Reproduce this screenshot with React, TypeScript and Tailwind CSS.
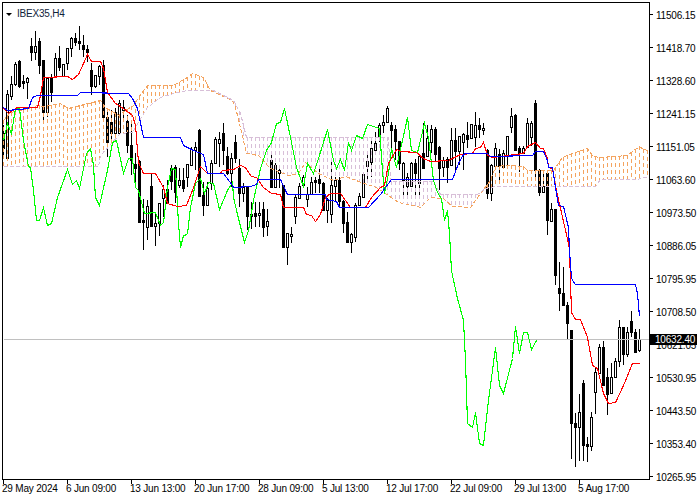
import React from "react";

type P = [number, number];
// [high, bodyTop, bodyBottom, low, white?] — one bar every 4 px, starting at x = 3
const bars: [number, number, number, number, number][] = [
  [125,133,148,158,0],[90,94,158,160,1],[76,84,96,100,1],[62,64,84,86,1],[60,61,86,88,0],[75,81,83,89,0],[77,78,82,99,1],[38,46,52,61,0],
  [31,46,52,60,1],[38,41,65,74,0],[60,60,112,122,0],[77,78,112,117,1],[74,78,92,102,0],[53,58,76,77,1],[46,58,67,71,0],[64,64,76,77,1],
  [48,48,63,70,1],[37,38,48,57,1],[33,38,42,46,0],[26,41,43,50,0],[35,45,49,57,0],[45,49,52,62,0],[63,70,86,95,0],[75,75,86,88,1],
  [65,66,76,85,1],[60,65,117,118,0],[110,117,142,157,0],[110,122,133,142,0],[108,112,133,137,1],[100,103,133,135,1],[100,107,110,120,1],[115,121,145,153,0],
  [123,145,160,175,0],[153,164,168,185,0],[160,161,222,222,0],[199,220,222,250,0],[200,206,227,240,1],[173,186,226,226,0],[212,223,226,246,1],[203,203,223,236,1],
  [185,189,198,217,1],[180,189,203,203,0],[165,168,181,190,0],[165,167,192,203,0],[168,180,185,188,1],[168,180,188,192,0],[164,164,177,187,1],[147,149,165,165,1],
  [142,147,150,170,1],[129,130,196,197,0],[182,195,205,216,0],[182,188,205,205,1],[160,163,183,190,1],[137,139,163,163,1],[132,139,143,167,1],[123,133,150,165,0],
  [147,156,173,175,0],[153,158,173,187,1],[135,142,158,163,0],[159,168,193,207,0],[183,187,193,202,1],[186,186,216,230,0],[202,214,216,229,0],[202,213,216,227,0],
  [202,213,215,227,1],[202,209,227,237,0],[209,221,226,236,1],[153,160,187,187,0],[163,165,187,188,1],[165,170,173,188,1],[185,185,247,247,0],[233,233,247,265,1],
  [227,234,236,243,1],[194,197,216,224,1],[183,186,198,198,1],[175,177,185,187,1],[187,194,199,207,1],[177,182,194,195,1],[177,180,182,193,0],[168,179,183,193,0],
  [182,183,210,210,0],[198,200,210,223,1],[158,185,214,223,1],[177,180,186,202,1],[177,180,201,207,0],[200,201,223,233,0],[212,222,242,242,0],[233,234,242,253,1],
  [203,205,237,242,1],[193,196,205,206,1],[174,174,197,197,1],[155,161,166,179,1],[138,148,162,177,1],[132,143,150,150,1],[123,125,136,142,1],[115,122,125,133,1],
  [106,108,122,122,1],[122,125,130,153,0],[125,129,141,160,0],[141,141,163,170,0],[162,163,180,197,1],[173,177,186,197,1],[162,163,186,186,1],[159,163,173,197,0],
  [156,156,183,197,1],[123,153,168,168,0],[125,138,156,156,1],[125,129,142,153,1],[127,129,154,162,0],[146,147,168,190,0],[157,160,167,177,1],[157,159,167,183,0],
  [128,140,165,166,1],[128,140,151,170,0],[136,136,151,165,1],[133,134,142,170,1],[122,135,139,148,0],[124,124,138,139,1],[112,125,137,147,1],[118,125,129,138,0],
  [123,128,130,135,1],[149,150,193,199,0],[164,165,193,201,1],[143,148,166,167,1],[149,154,166,182,0],[150,153,167,167,1],[136,136,155,166,1],[108,116,127,133,1],
  [114,115,150,151,0],[146,148,153,172,0],[146,148,153,154,1],[118,123,147,147,1],[121,123,137,146,1],[100,103,170,181,0],[169,170,192,196,0],[174,186,192,192,1],
  [173,173,220,235,0],[203,209,221,222,1],[209,209,275,285,0],[262,288,293,311,0],[267,293,305,306,0],[302,305,323,340,0],[330,330,423,459,0],[413,423,427,467,0],
  [394,412,427,461,1],[380,383,445,461,0],[437,444,446,462,0],[412,417,446,451,1],[368,372,392,414,1],[344,347,373,373,1],[341,347,385,385,0],[368,377,394,415,0],
  [363,377,393,394,1],[358,361,377,378,1],[320,327,361,367,1],[327,327,354,365,0],[327,332,354,357,1],[311,321,332,337,0],[329,332,352,353,0],[329,339,350,352,1],
];

const blue: P[] = [[3,107],[7,110],[28,108],[32,97],[37,95],[77,95],[80,92],[128,93],[132,98],[137,108],[143,137],[180,137],[183,145],[193,150],[203,154],[207,173],[223,173],[232,185],[233,187],[250,186],[256,184],[258,179],[280,179],[287,194],[325,194],[326,199],[336,201],[339,207],[368,207],[380,194],[385,187],[391,179],[452,179],[458,163],[463,154],[465,153],[487,153],[490,156],[532,155],[535,151],[543,151],[547,160],[548,167],[552,167],[555,187],[558,205],[563,206],[568,227],[569,250],[571,278],[575,284],[635,284],[637,293],[639,316]];
const red: P[] = [[3,108],[8,113],[17,107],[37,107],[40,95],[43,77],[67,76],[72,79],[78,74],[83,63],[87,54],[91,61],[100,61],[103,68],[107,92],[115,103],[123,108],[132,115],[135,125],[138,162],[143,173],[155,173],[163,187],[167,203],[177,206],[186,205],[192,190],[200,166],[207,173],[220,173],[222,170],[233,169],[240,165],[245,167],[251,176],[256,177],[263,187],[271,193],[280,194],[283,207],[303,207],[306,214],[311,215],[315,221],[320,214],[325,197],[330,193],[340,193],[350,207],[365,207],[371,197],[380,187],[384,185],[388,163],[396,149],[401,151],[416,152],[423,158],[430,161],[448,160],[460,154],[472,153],[475,148],[480,147],[483,142],[487,155],[492,157],[523,153],[527,146],[535,142],[540,148],[543,148],[547,158],[548,167],[552,168],[555,186],[568,243],[569,250],[571,312],[575,319],[580,319],[587,337],[592,365],[597,368],[603,393],[608,403],[615,402],[623,385],[632,363],[639,363]];
const green: P[] = [[3,140],[7,123],[11,133],[15,108],[19,108],[23,140],[28,166],[30,167],[33,190],[36,220],[39,220],[43,207],[47,225],[51,223],[57,197],[62,183],[67,169],[72,184],[76,180],[79,188],[86,153],[90,148],[93,165],[95,197],[99,205],[107,170],[112,142],[116,140],[123,173],[128,158],[132,158],[135,187],[138,190],[144,213],[155,212],[160,225],[163,222],[167,187],[171,168],[175,169],[178,223],[180,247],[183,235],[187,234],[190,207],[195,183],[200,178],[204,193],[208,182],[213,183],[219,209],[227,190],[232,182],[233,197],[238,218],[244,242],[248,230],[253,200],[260,168],[266,150],[271,142],[276,123],[280,122],[284,108],[290,137],[296,167],[303,186],[307,163],[313,173],[318,158],[327,129],[333,160],[336,168],[340,159],[344,170],[348,142],[351,150],[356,135],[362,138],[367,124],[379,128],[382,170],[384,193],[388,173],[391,148],[396,167],[407,117],[411,150],[417,152],[424,123],[428,137],[433,180],[437,192],[441,198],[444,220],[447,210],[449,233],[451,270],[452,275],[457,298],[463,320],[465,360],[467,423],[472,427],[475,412],[479,443],[483,445],[488,400],[495,347],[499,385],[503,393],[512,358],[515,326],[519,353],[523,332],[527,332],[531,349],[536,340]];
const spanA: P[] = [[3,120],[10,112],[28,108],[37,105],[43,106],[60,103],[68,108],[80,105],[100,100],[105,107],[118,115],[125,110],[133,105],[138,97],[147,85],[173,85],[187,77],[192,73],[203,77],[210,90],[232,100],[235,107],[240,127],[246,153],[258,155],[270,168],[288,175],[298,173],[305,162],[318,173],[333,180],[345,176],[361,182],[376,187],[388,195],[398,202],[413,205],[420,207],[430,197],[443,198],[452,206],[470,207],[480,193],[490,180],[495,166],[507,165],[523,166],[527,170],[553,170],[562,157],[572,153],[587,148],[592,155],[598,157],[615,156],[627,155],[632,151],[639,146],[643,149],[648,150]];
const spanB: P[] = [[3,166],[98,166],[100,155],[120,133],[132,132],[147,107],[160,97],[173,93],[187,90],[213,90],[233,100],[240,113],[246,137],[388,137],[390,181],[433,181],[440,194],[477,194],[485,188],[495,186],[595,186],[600,179],[637,179],[643,177],[648,177]];

function at(pts: P[], x: number) {
  for (let i = 1; i < pts.length; i++) {
    if (x <= pts[i][0]) {
      const [x0, y0] = pts[i - 1];
      const [x1, y1] = pts[i];
      return Math.round(y0 + ((y1 - y0) * (x - x0)) / Math.max(1, x1 - x0));
    }
  }
  return pts[pts.length - 1][1];
}
const str = (pts: P[]) => pts.map((p) => p.join(",")).join(" ");

let hatchOrange = "";
let hatchThistle = "";
for (let x = 3; x <= 647; x += 4) {
  const a = at(spanA, x);
  const b = at(spanB, x);
  const seg = `M${x}.5 ${Math.min(a, b)}V${Math.max(a, b)}`;
  if (a <= b) hatchOrange += seg;
  else hatchThistle += seg;
}

const prices = ["11506.15","11418.70","11328.60","11241.15","11151.05","11063.60","10973.50","10886.05","10795.95","10708.50","10621.05","10530.95","10443.50","10353.40","10265.95"];
const dates = ["29 May 2024","6 Jun 09:00","13 Jun 13:00","20 Jun 17:00","28 Jun 09:00","5 Jul 13:00","12 Jul 17:00","22 Jul 09:00","29 Jul 13:00","5 Aug 17:00"];

function Chart() {
  return (
    <svg width={646} height={476} viewBox="3 3 646 476" shapeRendering="crispEdges" className="block">
      {bars.map(([h, t, b, l, w], i) => {
        const x = 3 + i * 4;
        return (
          <g key={i}>
            <rect x={x} y={h} width={1} height={Math.max(1, l - h)} fill="#000" />
            <rect x={x - 1} y={t} width={3} height={Math.max(1, b - t + 1)} fill="#000" />
            {w === 1 && b - t > 1 && <rect x={x} y={t + 1} width={1} height={b - t - 1} fill="#fff" />}
          </g>
        );
      })}
      <path d={hatchOrange} fill="none" stroke="#f4a460" strokeDasharray="4 3" />
      <path d={hatchThistle} fill="none" stroke="#d8bfd8" strokeDasharray="4 3" />
      <g transform="translate(0.5 0.5)" fill="none">
        <polyline points={str(spanA)} stroke="#f4a460" strokeDasharray="4 2" />
        <polyline points={str(spanB)} stroke="#d8bfd8" strokeDasharray="4 2" />
        <line x1={3} x2={649} y1={339} y2={339} stroke="#c0c0c0" />
        <polyline points={str(green)} stroke="#00ff00" strokeWidth={1.1} />
        <polyline points={str(red)} stroke="#ff0000" strokeWidth={1.1} />
        <polyline points={str(blue)} stroke="#0000ff" strokeWidth={1.1} />
      </g>
    </svg>
  );
}

export default function App() {
  return (
    <div className="relative flex h-[500px] w-[700px] overflow-hidden bg-white font-['Liberation_Sans',sans-serif] text-[10px] leading-none tracking-[-0.2px] text-black">
      <div className="flex flex-col pl-[2px] pt-[2px]">
        <div className="relative h-[478px] w-[648px] overflow-hidden border border-black">
          <Chart />
          <div className="absolute left-[3px] top-[6px] flex items-center gap-[5px]">
            <span className="h-0 w-0 border-x-[3px] border-t-[3px] border-x-transparent border-t-black" />
            <span className="text-[#10233a]">IBEX35,H4</span>
          </div>
        </div>
        <div className="flex pl-px">
          {dates.map((d) => (
            <div key={d} className="flex w-[64px] flex-col">
              <div className="h-[4px] w-px bg-black" />
              <span className="-ml-px whitespace-nowrap">{d}</span>
            </div>
          ))}
        </div>
      </div>
      <div className="mt-[-2px] flex flex-col">
        {prices.map((p) => (
          <div key={p} className="flex h-[33px] items-center">
            <div className="h-px w-[3px] bg-black" />
            <span className="ml-[3px] whitespace-nowrap pt-[2px]">{p}</span>
          </div>
        ))}
      </div>
      <div className="absolute left-[650px] top-[334px] flex h-[11px] w-[47px] items-center bg-black pl-[5px] text-white">10632.40</div>
    </div>
  );
}
